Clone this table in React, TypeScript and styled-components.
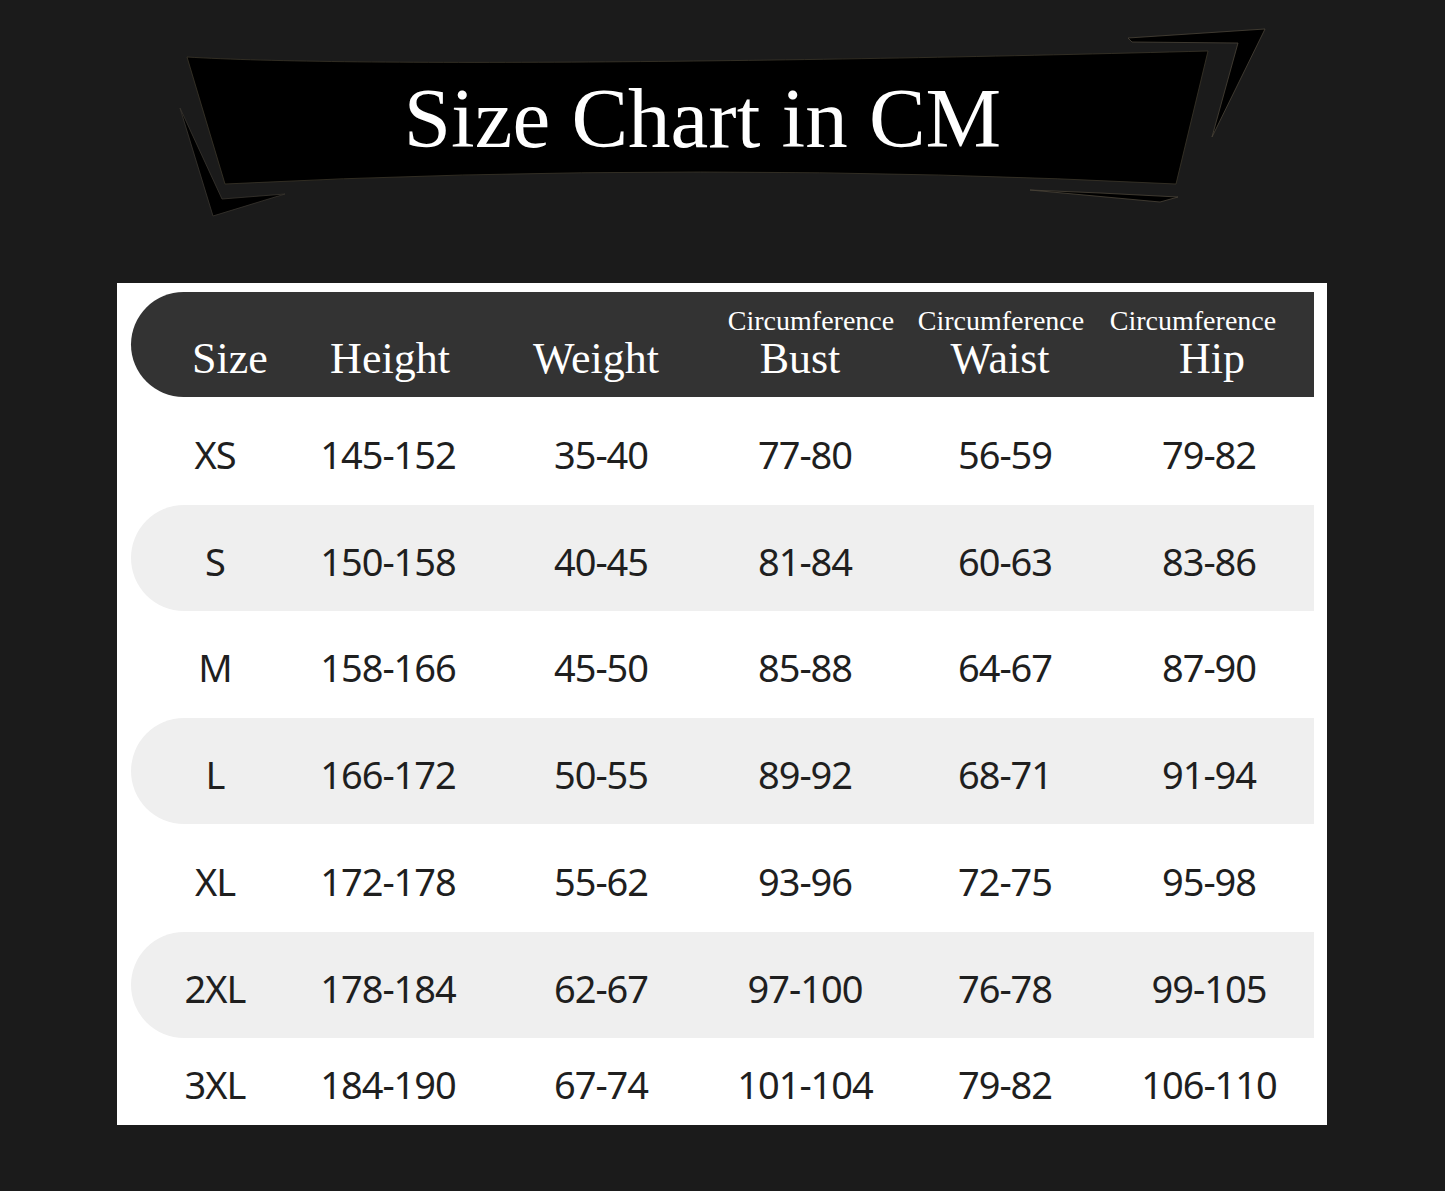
import React from 'react'
import styled, { createGlobalStyle } from 'styled-components'

const GlobalStyle = createGlobalStyle`
  html, body {
    margin: 0;
    padding: 0;
    background: #1b1b1b;
  }
`

type HeadCol = {
  key: string
  label: string
  sub?: string
  shift: number
  subShift?: number
}

const headCols: HeadCol[] = [
  { key: 'size', label: 'Size', shift: 15 },
  { key: 'height', label: 'Height', shift: 2 },
  { key: 'weight', label: 'Weight', shift: -5 },
  { key: 'bust', label: 'Bust', sub: 'Circumference', shift: -5, subShift: 6 },
  { key: 'waist', label: 'Waist', sub: 'Circumference', shift: -5, subShift: -4 },
  { key: 'hip', label: 'Hip', sub: 'Circumference', shift: 3, subShift: -16 },
]

const rows: string[][] = [
  ['XS', '145-152', '35-40', '77-80', '56-59', '79-82'],
  ['S', '150-158', '40-45', '81-84', '60-63', '83-86'],
  ['M', '158-166', '45-50', '85-88', '64-67', '87-90'],
  ['L', '166-172', '50-55', '89-92', '68-71', '91-94'],
  ['XL', '172-178', '55-62', '93-96', '72-75', '95-98'],
  ['2XL', '178-184', '62-67', '97-100', '76-78', '99-105'],
  ['3XL', '184-190', '67-74', '101-104', '79-82', '106-110'],
]

// row heights as measured off the chart
const rowHeights = [108, 106, 107, 106, 108, 106, 87]

const COLUMNS = '168px 178px 248px 160px 240px 168px 1fr'

export default function App() {
  return (
    <Page>
      <GlobalStyle />
      <Banner>
        <BannerShape viewBox="0 0 1445 283" preserveAspectRatio="none">
          <path
            d="M1128,38 L1265,29 L1212,137 L1238,43 L1132,42 Z"
            fill="#000"
            stroke="#4a4438"
            strokeWidth="0.8"
          />
          <path
            d="M180,108 L213,216 L285,194 L222,199 Z"
            fill="#000"
            stroke="#3a3630"
            strokeWidth="0.8"
          />
          <path d="M1030,190 L1160,202 L1178,197 L1100,193 Z" fill="#000" stroke="#4a4438" strokeWidth="0.8" />
          <path
            d="M187,57 C350,67 800,62 1208,51 L1176,184 Q700,160 225,184 Z"
            fill="#000"
            stroke="#3b3629"
            strokeWidth="0.8"
          />
        </BannerShape>
        <Title>Size Chart in CM</Title>
      </Banner>
      <Card>
        <HeaderRow>
          {headCols.map((c) => (
            <HeadCell key={c.key}>
              {c.sub && <SubLabel $shift={c.subShift ?? 0}>{c.sub}</SubLabel>}
              <HeadLabel $shift={c.shift}>{c.label}</HeadLabel>
            </HeadCell>
          ))}
        </HeaderRow>
        {rows.map((r, i) => (
          <Row key={r[0]} $shade={i % 2 === 1} $height={rowHeights[i]}>
            {r.map((v, j) => (
              <Cell key={j}>{v}</Cell>
            ))}
          </Row>
        ))}
      </Card>
    </Page>
  )
}

const Page = styled.div`
  width: 1445px;
  min-height: 1191px;
  background: #1b1b1b;
  padding-bottom: 66px;
  box-sizing: border-box;
`

const Banner = styled.div`
  position: relative;
  height: 283px;
  display: flex;
  justify-content: center;
  align-items: flex-start;
`

const BannerShape = styled.svg`
  position: absolute;
  left: 0;
  top: 0;
  width: 100%;
  height: 100%;
`

const Title = styled.h1`
  position: relative;
  margin: 0;
  padding-top: 68px;
  padding-right: 40px;
  font-family: 'Liberation Serif', serif;
  font-weight: 400;
  font-size: 85px;
  line-height: 100px;
  color: #fff;
`

const Card = styled.div`
  margin-left: 117px;
  width: 1210px;
  background: #fff;
  padding: 9px 13px 0 14px;
  box-sizing: border-box;
  overflow: hidden;
`

const HeaderRow = styled.div`
  display: grid;
  grid-template-columns: ${COLUMNS};
  height: 105px;
  background: #333333;
  border-radius: 53px 0 0 53px;
`

const HeadCell = styled.div`
  display: flex;
  flex-direction: column;
  align-items: center;
  justify-content: flex-end;
  padding-bottom: 16px;
  color: #fff;
  font-family: 'Liberation Serif', serif;
  white-space: nowrap;
`

const SubLabel = styled.div<{ $shift: number }>`
  font-size: 28px;
  line-height: 28px;
  margin-bottom: 2px;
  transform: translateX(${(p) => p.$shift}px);
`

const HeadLabel = styled.div<{ $shift: number }>`
  font-size: 44px;
  line-height: 44px;
  transform: translateX(${(p) => p.$shift}px);
`

const Row = styled.div<{ $shade: boolean; $height: number }>`
  display: grid;
  grid-template-columns: ${COLUMNS};
  height: ${(p) => p.$height}px;
  background: ${(p) => (p.$shade ? '#efefef' : '#fff')};
  border-radius: 53px 0 0 53px;
`

const Cell = styled.div`
  display: flex;
  align-items: center;
  justify-content: center;
  padding-top: 5px;
  font-family: 'Noto Sans', sans-serif;
  font-size: 38px;
  letter-spacing: -1px;
  line-height: 1;
  color: #1f1f1f;
  white-space: nowrap;
`
